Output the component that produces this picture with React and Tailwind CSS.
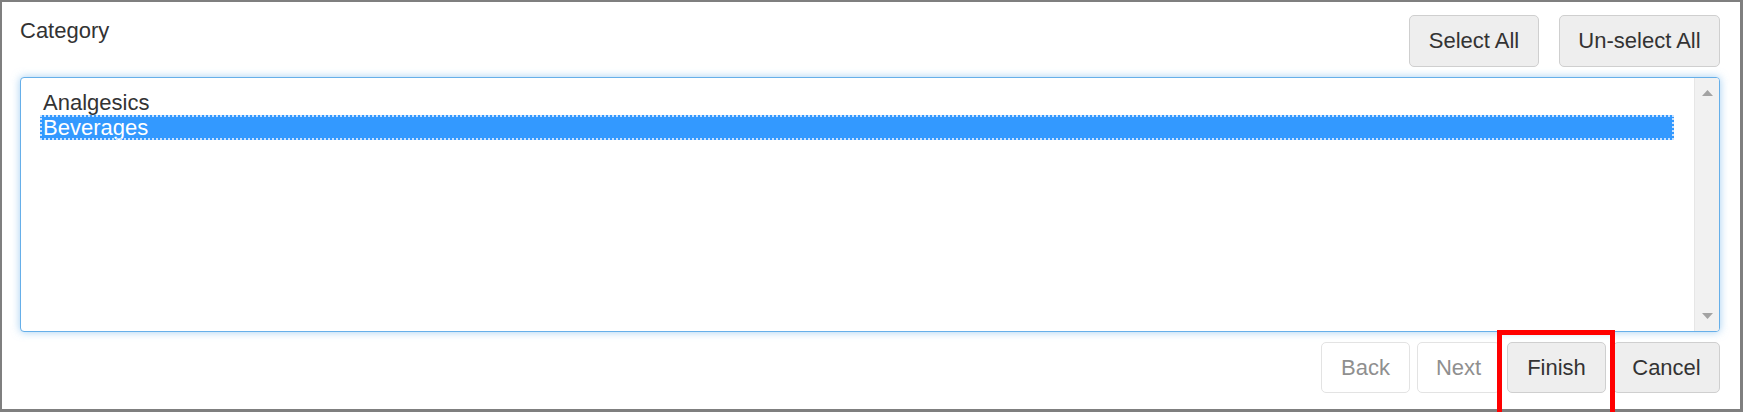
import React, { useState } from 'react';

const categories = ['Analgesics', 'Beverages'];

const Btn = ({ children, className = '', disabled }) => (
  <button
    disabled={disabled}
    className={`h-[51px] rounded-[5px] border text-[22px] leading-none ${
      disabled
        ? 'bg-white border-[#e3e3e3] text-[#8f8f8f]'
        : 'bg-[#eeeeee] border-[#cfcfcf] text-[#333333]'
    } ${className}`}
  >
    {children}
  </button>
);

const App = () => {
  const [selected, setSelected] = useState('Beverages');

  return (
    <div className="w-[1743px] h-[412px] overflow-hidden bg-white" style={{ fontFamily: '"Liberation Sans", Arial, sans-serif' }}>
      <div className="h-full border-t-2 border-l-2 border-r-[3px] border-b-[3px] border-[#7f7f7f] pl-[18px] pr-[20px] pt-[13px] flex flex-col">
        {/* header row */}
        <div className="flex items-start justify-between">
          <div className="text-[#333333] text-[22px] leading-[26px] mt-[3px]">Category</div>
          <div className="flex gap-[20px]">
            <Btn className="w-[130px] h-[52px]">Select All</Btn>
            <Btn className="w-[161px] h-[52px]">Un-select All</Btn>
          </div>
        </div>

        {/* list box */}
        <div className="mt-[10px] h-[255px] flex rounded-[4px] border border-[#66afe9] shadow-[0_0_8px_rgba(102,175,233,0.6)] overflow-hidden bg-white">
          <div className="flex-1 pl-[19px] pr-[20px] pt-[12px]">
            {categories.map((c) => (
              <div
                key={c}
                onClick={() => setSelected(c)}
                className={`h-[25px] pl-[3px] text-[22px] leading-[25px] cursor-default ${
                  selected === c
                    ? 'bg-[#3399ff] text-white outline-2 outline-dotted outline-[#c8e1ff] -outline-offset-2'
                    : 'text-[#333333]'
                }`}
              >
                {c}
              </div>
            ))}
          </div>
          <div className="w-[25px] bg-[#f1f1f1] border-l border-[#e6e6e6] flex flex-col justify-between items-center py-[12px]">
            <svg width="11" height="6" viewBox="0 0 11 6"><path d="M5.5 0L11 6H0z" fill="#a3a3a3" /></svg>
            <svg width="11" height="6" viewBox="0 0 11 6"><path d="M0 0h11L5.5 6z" fill="#a3a3a3" /></svg>
          </div>
        </div>

        {/* footer buttons */}
        <div className="mt-[10px] flex justify-end gap-[7px]">
          <Btn disabled className="w-[89px]">Back</Btn>
          <Btn disabled className="w-[83px]">Next</Btn>
          <div className="relative">
            <Btn className="w-[99px]">Finish</Btn>
            <div className="absolute -left-[10px] -top-[12px] w-[118px] h-[90px] border-[5px] border-[#ff0000] pointer-events-none z-10" />
          </div>
          <Btn className="w-[107px]">Cancel</Btn>
        </div>
      </div>
    </div>
  );
};

export default App;
